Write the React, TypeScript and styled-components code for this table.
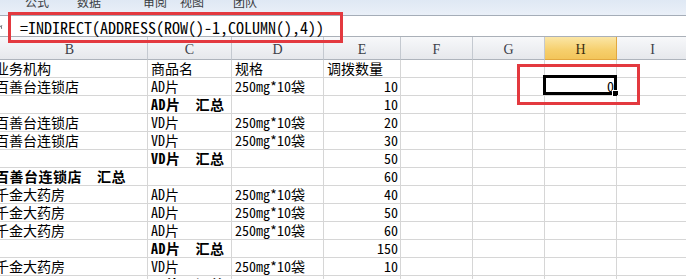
import { Fragment } from 'react';
import styled, { createGlobalStyle } from 'styled-components';

const CELL_FONT = `"Noto Sans Mono CJK SC", "Noto Sans CJK SC", monospace`;

const GlobalStyle = createGlobalStyle`
  body {
    margin: 0;
    background: #fff;
    font-family: ${CELL_FONT};
  }
`;

const Window = styled.div`
  position: relative;
  width: 686px;
  height: 279px;
  overflow: hidden;
  background: #fff;
  display: flex;
  flex-direction: column;
`;

const TabStrip = styled.div`
  flex: none;
  height: 15px;
  display: flex;
  overflow: hidden;
  background: linear-gradient(#dfe8f4, #eaf0f8);
  border-bottom: 1px solid #a5adb8;
  font-family: "Noto Sans CJK SC", sans-serif;
  font-size: 12px;
  line-height: 12px;
  color: #3a3d42;
`;

const Tab = styled.span<{ $gap: number }>`
  margin: -4px 0 0 ${(p) => p.$gap}px;
  white-space: nowrap;
`;

const FormulaBar = styled.div`
  flex: none;
  height: 20px;
  display: flex;
  align-items: center;
  border-bottom: 1px solid #aab0b8;
`;

const FxTail = styled.svg`
  flex: none;
  width: 4px;
  height: 20px;
`;

const Formula = styled.div`
  margin-left: 16px;
  padding-top: 1px;
  font-family: ${CELL_FONT};
  font-size: 16px;
  line-height: 20px;
  color: #000;
  white-space: nowrap;
`;

const Sheet = styled.div`
  display: grid;
  grid-template-columns: 156px 84px 92px 77px 72px 72px 72px 72px;
  grid-template-rows: 23px;
  grid-auto-rows: 18px;
  margin-left: -8px;
`;

const HeaderCell = styled.div<{ $active?: boolean }>`
  box-sizing: border-box;
  padding-top: 4px;
  text-align: center;
  font-family: "Liberation Serif", serif;
  font-size: 14px;
  line-height: 17px;
  color: ${(p) => (p.$active ? '#3b2f12' : '#3c4048')};
  background: ${(p) =>
    p.$active
      ? 'linear-gradient(#fbe6a6, #f6cf6c 60%, #f3c55a)'
      : 'linear-gradient(#f7f8fa, #e6e8ec)'};
  border-right: 1px solid ${(p) => (p.$active ? '#e2a83f' : '#c4c9d0')};
  border-bottom: 1px solid ${(p) => (p.$active ? '#e2a83f' : '#aeb4bc')};
`;

const Cell = styled.div<{ $num?: boolean; $bold?: boolean }>`
  position: relative;
  box-sizing: border-box;
  padding: 0 ${(p) => (p.$num ? '2px' : '3px')};
  text-align: ${(p) => (p.$num ? 'right' : 'left')};
  font-size: 14px;
  line-height: 17px;
  font-weight: ${(p) => (p.$bold ? 700 : 400)};
  letter-spacing: ${(p) => (p.$bold ? '0.5px' : '0')};
  color: #000;
  white-space: pre;
  border-right: 1px solid #d6d6d6;
  border-bottom: 1px solid #d6d6d6;
`;

const Selection = styled.div`
  position: absolute;
  left: -2px;
  top: -3px;
  right: -1px;
  bottom: 0;
  border: 3px solid #000;
  pointer-events: none;
`;

const FillHandle = styled.div`
  position: absolute;
  right: -5px;
  bottom: -5px;
  width: 5px;
  height: 5px;
  background: #000;
  border: 1px solid #fff;
`;

const Callout = styled.div<{ $x: number; $y: number; $w: number; $h: number }>`
  position: absolute;
  left: ${(p) => p.$x}px;
  top: ${(p) => p.$y}px;
  width: ${(p) => p.$w}px;
  height: ${(p) => p.$h}px;
  box-sizing: border-box;
  border: 3px solid #e3393f;
  pointer-events: none;
`;

const tabs = [
  { label: '公式', gap: 25 },
  { label: '数据', gap: 28 },
  { label: '审阅', gap: 42 },
  { label: '视图', gap: 13 },
  { label: '团队', gap: 29 },
];

const columns = ['B', 'C', 'D', 'E', 'F', 'G', 'H', 'I'];

type Row = {
  org?: string;
  item?: string;
  spec?: string;
  qty?: string | number;
  total?: 'org' | 'item';
  result?: number;
};

const rows: Row[] = [
  { org: '业务机构', item: '商品名', spec: '规格', qty: '调拨数量' },
  { org: '百善台连锁店', item: 'AD片', spec: '250mg*10袋', qty: 10, result: 0 },
  { item: 'AD片  汇总', qty: 10, total: 'item' },
  { org: '百善台连锁店', item: 'VD片', spec: '250mg*10袋', qty: 20 },
  { org: '百善台连锁店', item: 'VD片', spec: '250mg*10袋', qty: 30 },
  { item: 'VD片  汇总', qty: 50, total: 'item' },
  { org: '百善台连锁店  汇总', qty: 60, total: 'org' },
  { org: '千金大药房', item: 'AD片', spec: '250mg*10袋', qty: 40 },
  { org: '千金大药房', item: 'AD片', spec: '250mg*10袋', qty: 50 },
  { org: '千金大药房', item: 'AD片', spec: '250mg*10袋', qty: 60 },
  { item: 'AD片  汇总', qty: 150, total: 'item' },
  { org: '千金大药房', item: 'VD片', spec: '250mg*10袋', qty: 10 },
  { item: 'VD片  汇总', qty: 10, total: 'item' },
];

export default function App() {
  return (
    <>
      <GlobalStyle />
      <Window>
        <TabStrip>
          {tabs.map((t) => (
            <Tab key={t.label} $gap={t.gap}>
              {t.label}
            </Tab>
          ))}
        </TabStrip>

        <FormulaBar>
          <FxTail viewBox="0 0 4 20">
            <path d="M0 10.5 L2.2 9.6 M1.2 10 L1.6 12.8" stroke="#6b6f75" strokeWidth="1" fill="none" />
          </FxTail>
          <Formula>=INDIRECT(ADDRESS(ROW()-1,COLUMN(),4))</Formula>
        </FormulaBar>

        <Sheet>
          {columns.map((c) => (
            <HeaderCell key={c} $active={c === 'H'}>
              {c}
            </HeaderCell>
          ))}
          {rows.map((r, i) => (
            <Fragment key={i}>
              <Cell $bold={r.total === 'org'}>{r.org}</Cell>
              <Cell $bold={r.total === 'item'}>{r.item}</Cell>
              <Cell>{r.spec}</Cell>
              <Cell $num={typeof r.qty === 'number'}>{r.qty}</Cell>
              <Cell />
              <Cell />
              <Cell $num>
                {r.result !== undefined && (
                  <>
                    {r.result}
                    <Selection>
                      <FillHandle />
                    </Selection>
                  </>
                )}
              </Cell>
              <Cell />
            </Fragment>
          ))}
        </Sheet>

        <Callout $x={8} $y={12} $w={335} $h={31} />
        <Callout $x={517} $y={64} $w={123} $h={41} />
      </Window>
    </>
  );
}
